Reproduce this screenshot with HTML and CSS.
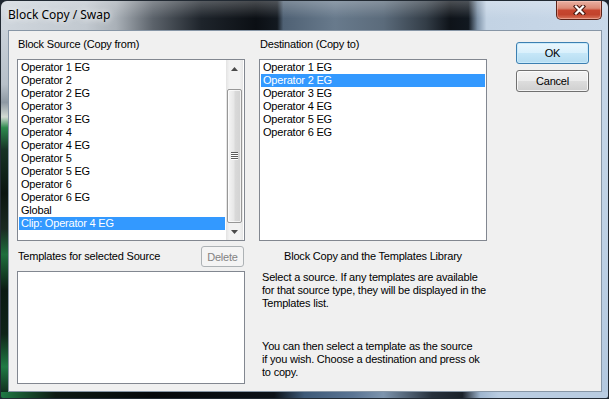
FILE: index.html
```html
<!DOCTYPE html>
<html>
<head>
    <title>Block Copy / Swap</title>
    <link rel="stylesheet" href="styles.css">
</head>
<body>
    <div class="window">
        <div class="titlebar">
            <span class="title">Block Copy / Swap</span>
            <button class="close-btn" type="button" aria-label="Close">
                <svg width="13" height="10" viewBox="0 0 13 10">
                    <path d="M3 1.5 L10 8.5 M10 1.5 L3 8.5" stroke="#4b1a12" stroke-width="4.4" stroke-linecap="square" fill="none"/>
                    <path d="M3 1.5 L10 8.5 M10 1.5 L3 8.5" stroke="#ffffff" stroke-width="2.2" stroke-linecap="square" fill="none"/>
                </svg>
            </button>
        </div>
        <div class="edge-left"></div>

        <div class="client">
            <div class="col">
                <div class="label">Block Source (Copy from)</div>
                <div class="listbox">
                    <ul class="items">
                        <li>Operator 1 EG</li>
                        <li>Operator 2</li>
                        <li>Operator 2 EG</li>
                        <li>Operator 3</li>
                        <li>Operator 3 EG</li>
                        <li>Operator 4</li>
                        <li>Operator 4 EG</li>
                        <li>Operator 5</li>
                        <li>Operator 5 EG</li>
                        <li>Operator 6</li>
                        <li>Operator 6 EG</li>
                        <li>Global</li>
                        <li class="selected">Clip: Operator 4 EG</li>
                    </ul>
                    <div class="scrollbar">
                        <div class="sb-arrow">
                            <svg width="7" height="4" viewBox="0 0 7 4"><polygon points="3.5,0 7,4 0,4" fill="#4a4a4a"/></svg>
                        </div>
                        <div class="sb-track">
                            <div class="sb-thumb">
                                <svg width="7" height="8" viewBox="0 0 7 8">
                                    <path d="M0 0.5 H7 M0 2.5 H7 M0 4.5 H7 M0 6.5 H7" stroke="#5c5c5c" stroke-width="1"/>
                                    <path d="M0 1.5 H7 M0 3.5 H7 M0 5.5 H7 M0 7.5 H7" stroke="#ffffff" stroke-width="1"/>
                                </svg>
                            </div>
                        </div>
                        <div class="sb-arrow">
                            <svg width="7" height="4" viewBox="0 0 7 4"><polygon points="0,0 7,0 3.5,4" fill="#4a4a4a"/></svg>
                        </div>
                    </div>
                </div>
                <div class="templates-row">
                    <span class="label">Templates for selected Source</span>
                    <button class="btn btn-delete" type="button" disabled>Delete</button>
                </div>
                <div class="listbox templates"></div>
            </div>

            <div class="col">
                <div class="label">Destination (Copy to)</div>
                <div class="listbox">
                    <ul class="items">
                        <li>Operator 1 EG</li>
                        <li class="selected">Operator 2 EG</li>
                        <li>Operator 3 EG</li>
                        <li>Operator 4 EG</li>
                        <li>Operator 5 EG</li>
                        <li>Operator 6 EG</li>
                    </ul>
                </div>
                <div class="caption">Block Copy and the Templates Library</div>
                <p class="help">Select a source. If any templates are available<br>for that source type, they will be displayed in the<br>Templates list.</p>
                <p class="help help-second">You can then select a template as the source<br>if you wish. Choose a destination and press ok<br>to copy.</p>
            </div>

            <div class="col buttons">
                <button class="btn btn-default" type="button">OK</button>
                <button class="btn" type="button">Cancel</button>
            </div>
        </div>

        <div class="edge-right"></div>
        <div class="edge-bottom"></div>
    </div>
</body>
</html>
```

FILE: styles.css
```css
body {
    margin: 0;
    width: 609px;
    height: 399px;
    overflow: hidden;
    background-color: #1c2530;
    font-family: "Liberation Sans", Arial, sans-serif;
    font-size: 11px;
    letter-spacing: -0.2px;
    color: #000;
}

.window {
    box-sizing: border-box;
    width: 609px;
    height: 399px;
    border: 1px solid #222a33;
    border-radius: 7px 7px 3px 3px;
    overflow: hidden;
    display: grid;
    grid-template-columns: 7px 1fr 6px;
    grid-template-rows: 29px 1fr 6px;
}

.titlebar {
    grid-column: 1 / -1;
    display: flex;
    align-items: flex-start;
    background:
        linear-gradient(to bottom, rgba(255, 255, 255, 0.25), rgba(255, 255, 255, 0) 60%),
        linear-gradient(to right,
            #cfd6dd 0%, #c2c9d0 14%, #a9b0b7 19%, #5c636b 25%, #1e242b 33%,
            #0b0f14 42%, #131920 45.5%, #4f6174 46.5%, #687a8c 55%, #5b6b7b 63%,
            #333d47 70%, #0e1319 74%, #111820 77%, #7f93a8 78.5%, #c3d3e4 80%, #c8d8e9 100%);
}

.title {
    padding: 6px 0 0 7px;
    font-family: "Noto Sans", "Open Sans", sans-serif;
    font-size: 12px;
    line-height: 16px;
    letter-spacing: 0;
    color: #000;
    text-shadow: 0 0 6px rgba(255, 255, 255, 0.9), 0 0 10px rgba(255, 255, 255, 0.7);
}

.close-btn {
    margin: 0 6px 0 auto;
    width: 46px;
    height: 19px;
    padding: 0;
    border: 1px solid #5c2318;
    border-top: none;
    border-radius: 0 0 5px 5px;
    display: flex;
    align-items: center;
    justify-content: center;
    background: linear-gradient(to bottom, #e9b0a2 0%, #db8a76 40%, #c7462f 52%, #c2432c 75%, #d8745b 100%);
    box-shadow: inset 0 0 0 1px rgba(255, 210, 200, 0.45);
}

.edge-left {
    background: linear-gradient(to bottom,
        #c9d1d9 0%, #b7c0c9 15%, #8e99a3 20%, #d3dbd4 24%, #2d8a4d 27%, #173325 33%,
        #0b1510 45%, #1a2a22 55%, #1e6f3d 62%, #0a1a12 72%, #0e2418 84%, #1f7a44 93%, #10301e 100%);
}

.edge-right {
    background: linear-gradient(to bottom, #c8d8e9, #bdd0e4 60%, #b3c8df);
}

.edge-bottom {
    grid-column: 1 / -1;
    background: linear-gradient(to right,
        #1f7a44 0%, #0e1a14 9%, #05080a 25%, #0c1218 45%, #3e5a78 50%, #5b7594 58%,
        #7d94ad 63%, #27313c 71%, #1a2129 76%, #9fb6cf 79%, #b9cce1 82%, #b9cce1 100%);
}

.client {
    background-color: #f0f0f0;
    border: 1px solid #8796a6;
    padding: 7px 0 0 8px;
    display: flex;
    align-items: flex-start;
}

.col {
    width: 228px;
    display: flex;
    flex-direction: column;
}

.col + .col {
    margin-left: 14px;
}

.col.buttons {
    width: 73px;
    margin-left: 29px;
    padding-top: 4px;
    gap: 6px;
}

.label {
    line-height: 13px;
    padding-left: 1px;
    white-space: nowrap;
}

.listbox {
    box-sizing: border-box;
    height: 182px;
    margin-top: 8px;
    border: 1px solid #828790;
    background-color: #fff;
    display: flex;
}

.items {
    flex: 1;
    list-style: none;
    margin: 0;
    padding: 1px 1px 0 1px;
}

.items li {
    line-height: 13px;
    height: 13px;
    padding-left: 2px;
    white-space: nowrap;
}

.items li.selected {
    background-color: #3399ff;
    color: #fff;
}

.scrollbar {
    width: 17px;
    margin-right: 1px;
    display: flex;
    flex-direction: column;
    background: linear-gradient(to right, #e3e3e3, #f2f2f2 20%, #f2f2f2 80%, #e6e6e6);
}

.sb-arrow {
    height: 17px;
    display: flex;
    align-items: center;
    justify-content: center;
}

.sb-track {
    flex: 1;
    display: flex;
    flex-direction: column;
    padding: 12px 1px 0 1px;
}

.sb-thumb {
    flex: 1;
    border: 1px solid #979797;
    border-radius: 2px;
    display: flex;
    align-items: center;
    justify-content: center;
    background: linear-gradient(to right, #f5f5f5, #e7e7e7 45%, #d9d9d9 55%, #d2d2d2);
    box-shadow: inset 0 0 0 1px rgba(255, 255, 255, 0.7);
}

.templates-row {
    margin-top: 5px;
    height: 21px;
    display: flex;
    align-items: center;
    justify-content: space-between;
}

.listbox.templates {
    height: 113px;
    margin-top: 4px;
}

.btn {
    box-sizing: border-box;
    height: 22px;
    padding: 0;
    font-family: "Liberation Sans", Arial, sans-serif;
    font-size: 11px;
    letter-spacing: -0.2px;
    color: #000;
    border: 1px solid #707070;
    border-radius: 3px;
    background: linear-gradient(to bottom, #f2f2f2 0%, #ebebeb 50%, #dddddd 50%, #cfcfcf 100%);
    box-shadow: inset 0 0 0 1px rgba(255, 255, 255, 0.75);
}

.btn-default {
    border-color: #3c7fb1;
    background: linear-gradient(to bottom, #eaf6fd 0%, #d9f0fc 50%, #c6e7f8 50%, #b5dcf1 100%);
    box-shadow: inset 0 0 0 1px #c9eafb;
}

.btn-delete {
    width: 43px;
    height: 21px;
    margin-right: 1px;
    color: #838383;
    border-color: #adb2b5;
    background: #f4f4f4;
    box-shadow: none;
}

.caption {
    margin-top: 9px;
    line-height: 13px;
    text-align: center;
    white-space: nowrap;
}

.help {
    margin: 8px 0 0 0;
    padding-left: 3px;
    line-height: 13px;
    white-space: nowrap;
}

.help-second {
    margin-top: 30px;
}
```
